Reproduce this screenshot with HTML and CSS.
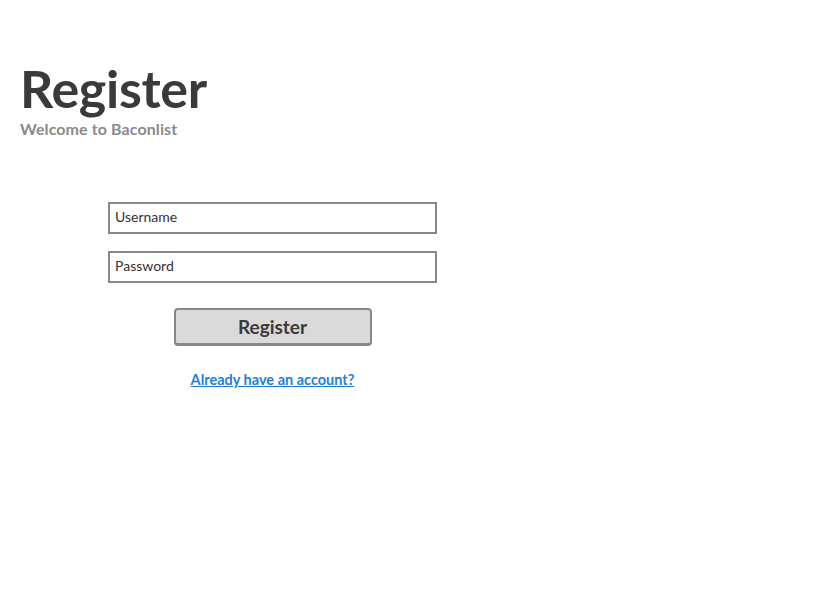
FILE: index.html
```html
<!DOCTYPE html>
<html>
<head>
<meta charset="utf-8">
<link rel="stylesheet" href="styles.css">
</head>
<body>
<header class="hero">
  <h1 class="title">Register</h1>
  <p class="subtitle">Welcome to Baconlist</p>
</header>
<form class="form">
  <div class="field"><input class="input" type="text" placeholder="Username"></div>
  <div class="field"><input class="input" type="password" placeholder="Password"></div>
  <div class="actions"><button class="btn" type="button">Register</button></div>
  <div class="links"><a class="link" href="#">Already have an account?</a></div>
</form>
</body>
</html>
```
FILE: styles.css
```css
* { box-sizing: border-box; }
body {
  margin: 0;
  font-family: Lato, "Open Sans", sans-serif;
  background: #fff;
  color: #3a3a3a;
}
.hero {
  padding: 62px 0 0 20px;
}
.title {
  margin: 0;
  font-size: 52px;
  font-weight: 700;
  line-height: 52px;
  color: #3a3a3a;
  letter-spacing: -0.3px;
}
.subtitle {
  margin: 6px 0 0;
  font-size: 16px;
  font-weight: 700;
  color: #8a8a8a;
  line-height: 18px;
  letter-spacing: 0.1px;
}
.form {
  width: 329px;
  margin: 64px 0 0 108px;
  display: flex;
  flex-direction: column;
}
.field { margin-bottom: 17px; }
.input {
  display: block;
  width: 100%;
  height: 32px;
  border: 2px solid #888;
  padding: 0 5px 3px;
  font-family: Lato, sans-serif;
  font-size: 14px;
  color: #333;
  outline: none;
}
.input::placeholder { color: #333; }
.actions {
  display: flex;
  justify-content: center;
  margin-top: 8px;
}
.btn {
  width: 198px;
  height: 38px;
  background: #dadada;
  border: 2px solid #888;
  border-bottom-width: 3px;
  border-radius: 4px;
  font-family: Lato, sans-serif;
  font-size: 19px;
  font-weight: 700;
  color: #3a3a3a;
  padding: 0;
}
.links {
  display: flex;
  justify-content: center;
  margin-top: 25px;
}
.link {
  font-size: 14.5px;
  font-weight: 700;
  color: #1e7fd6;
  text-decoration: underline;
}
```
